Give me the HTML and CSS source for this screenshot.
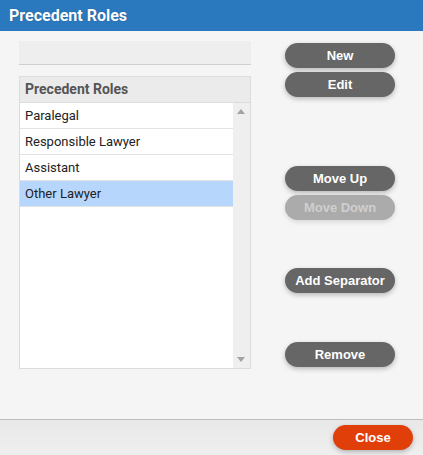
FILE: index.html
```html
<!DOCTYPE html>
<html lang="en">
<head>
  <meta charset="UTF-8">
  <title>Precedent Roles</title>
  <link rel="stylesheet" href="styles.css">
</head>
<body>
  <div class="dialog">
    <div class="titlebar">Precedent Roles</div>

    <div class="content">
      <div class="left">
        <div class="filter"></div>
        <div class="list">
          <div class="list-head">Precedent Roles</div>
          <div class="list-body">
            <div class="rows">
              <div class="row">Paralegal</div>
              <div class="row">Responsible Lawyer</div>
              <div class="row">Assistant</div>
              <div class="row selected">Other Lawyer</div>
            </div>
            <div class="scrollbar">
              <span class="arrow up"></span>
              <span class="arrow down"></span>
            </div>
          </div>
        </div>
      </div>

      <div class="actions">
        <button class="btn">New</button>
        <button class="btn">Edit</button>
        <button class="btn gap-lg">Move Up</button>
        <button class="btn" disabled>Move Down</button>
        <button class="btn gap-md">Add Separator</button>
        <button class="btn gap-md2">Remove</button>
      </div>
    </div>

    <div class="footer">
      <button class="btn close">Close</button>
    </div>
  </div>
</body>
</html>
```

FILE: styles.css
```css
html, body { margin: 0; padding: 0; }
body { font-family: Roboto, "Liberation Sans", sans-serif; background: #f5f5f5; color: #222; }

.dialog { width: 423px; height: 455px; display: flex; flex-direction: column; }

.titlebar {
  height: 31px; line-height: 31px; padding-left: 9px;
  background: #2a78bd; color: #fff;
  font-size: 16px; font-weight: bold;
  text-shadow: 0 0 1px rgba(0,0,0,0.3);
}

.content { flex: 1; display: flex; padding: 0 0 0 19px; }
.left { width: 232px; }

.filter {
  margin-top: 10px; height: 23px;
  background: #eeeeee; border-bottom: 1px solid #cfcfcf;
}

.list {
  margin-top: 11px; height: 291px;
  border: 1px solid #dcdcdc; background: #fff;
  display: flex; flex-direction: column;
}
.list-head {
  height: 25px; line-height: 25px; padding-left: 5px;
  background: #ebebeb; border-bottom: 1px solid #dcdcdc;
  color: #555; font-size: 14px; font-weight: bold;
}
.list-body { flex: 1; display: flex; }
.rows { flex: 1; }
.row {
  height: 25px; line-height: 25px; padding-left: 5px;
  border-bottom: 1px solid #e3e3e3; font-size: 13px;
}
.row.selected { background: #b6d6fb; }

.scrollbar {
  width: 17px; background: #efefef; position: relative;
}
.arrow { position: absolute; left: 4px; width: 0; height: 0; border-left: 4px solid transparent; border-right: 4px solid transparent; }
.arrow.up { top: 6px; border-bottom: 5px solid #a3a3a3; }
.arrow.down { bottom: 6px; border-top: 5px solid #a3a3a3; }

.actions { margin-left: 34px; display: flex; flex-direction: column; padding-top: 12px; }

.btn {
  width: 110px; height: 25px; padding: 0;
  border: none; border-radius: 13px;
  background: #666; color: #fff;
  font-family: "Liberation Sans", Arial, sans-serif;
  font-size: 13px; font-weight: bold;
  box-shadow: 0 2px 5px rgba(0,0,0,0.25);
  margin-bottom: 4px; cursor: pointer;
}
.btn:disabled { background: #ababab; color: #cfcfcf; box-shadow: 0 2px 5px rgba(0,0,0,0.12); }
.gap-lg { margin-top: 65px; }
.gap-md { margin-top: 44px; }
.gap-md2 { margin-top: 45px; }

.footer {
  height: 35px; border-top: 1px solid #bdbdbd;
  background: linear-gradient(#e8e8e8, #efefef);
  display: flex; justify-content: flex-end; align-items: flex-start;
  padding: 5px 10px 0 0; box-sizing: border-box; height: 36px;
}
.btn.close { width: 80px; background: #e13f0a; margin: 0; }
```
